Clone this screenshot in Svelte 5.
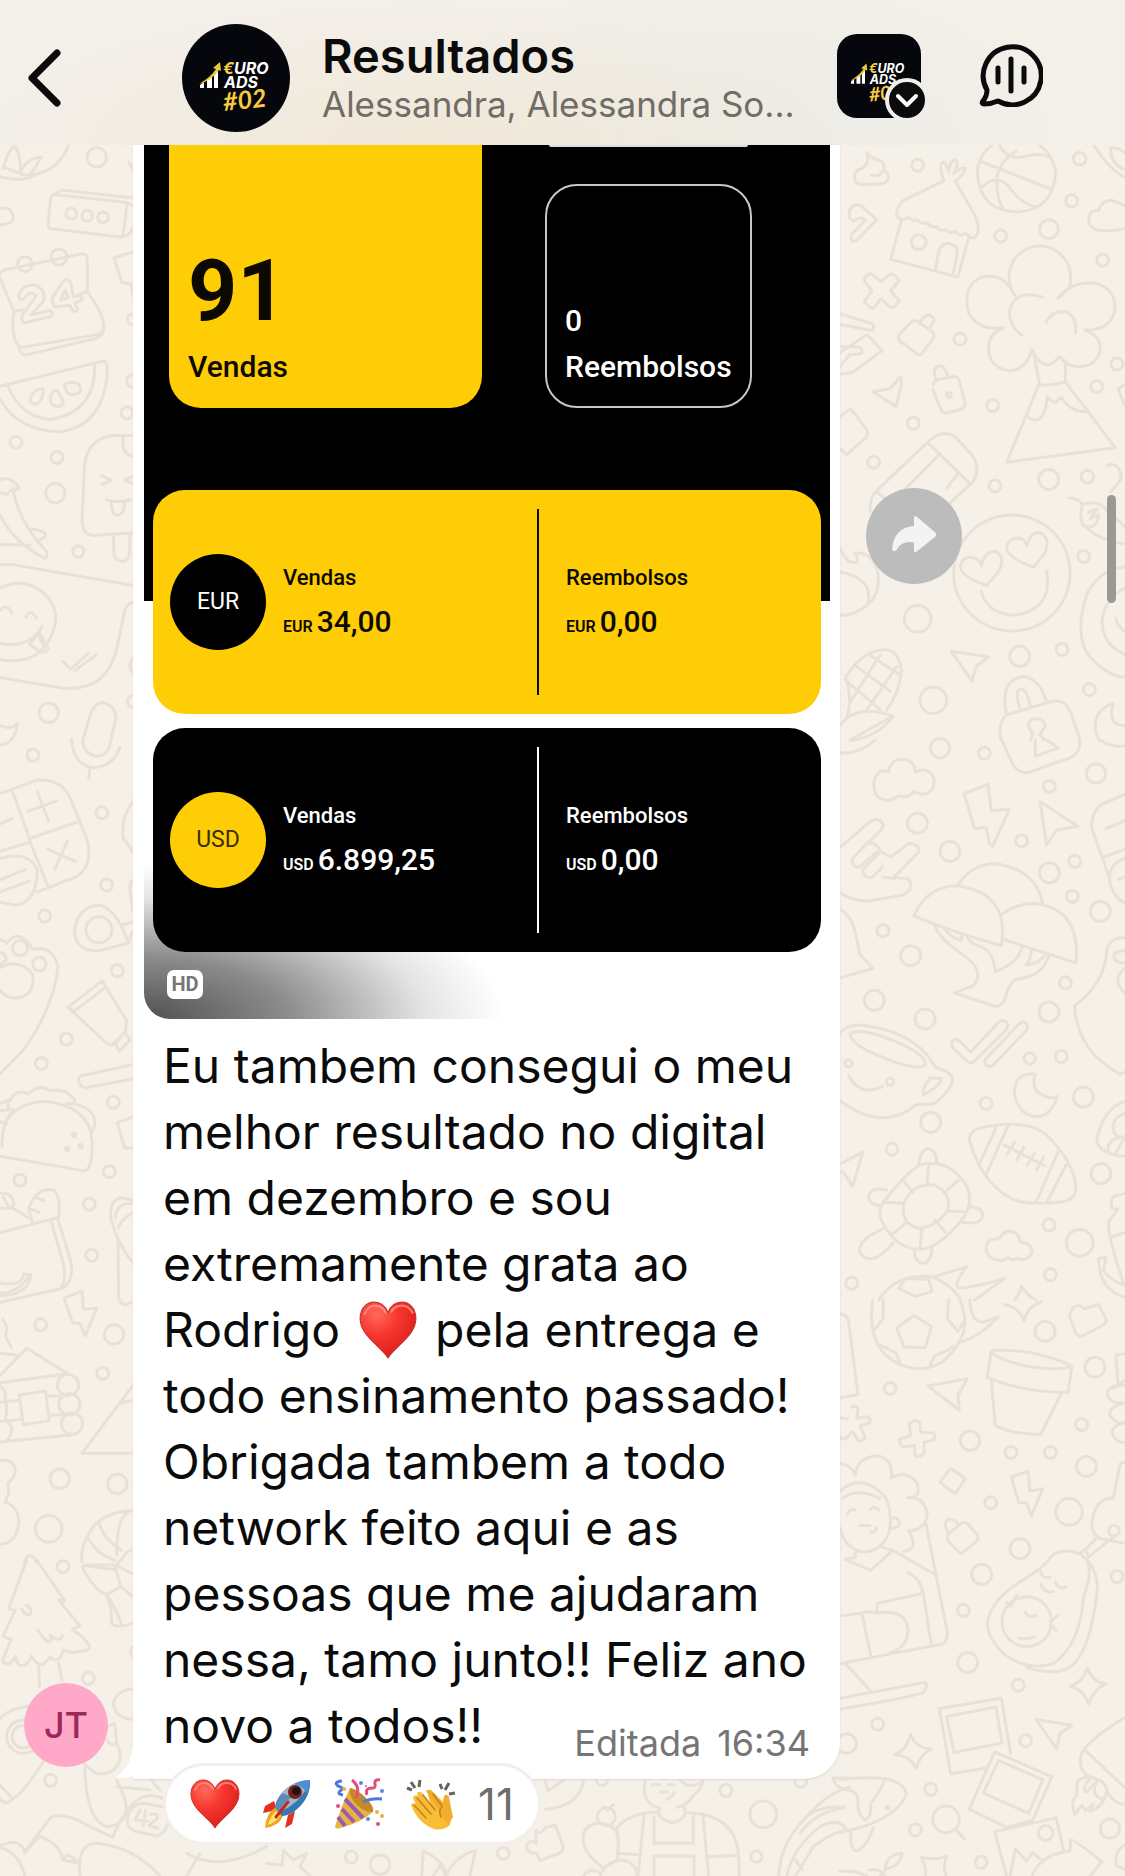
<script lang="ts">
  type Dot = [number, number, number];

  interface Panel {
    x: number;
    y: number;
    ky: number;
    dots: Dot[];
    paths: string[];
  }

  // "♥" marks where the heart drawing goes
  const lines = [
    "Eu tambem consegui o meu",
    "melhor resultado no digital",
    "em dezembro e sou",
    "extremamente grata ao",
    "Rodrigo ♥ pela entrega e",
    "todo ensinamento passado!",
    "Obrigada tambem a todo",
    "network feito aqui e as",
    "pessoas que me ajudaram",
    "nessa, tamo junto!! Feliz ano",
  ];
  const lastLine = "novo a todos!!";

  const balances = [
    { code: "EUR", sales: "34,00", refunds: "0,00", dark: false },
    { code: "USD", sales: "6.899,25", refunds: "0,00", dark: true },
  ];

  const STEP = 1 / 3;

  // Wallpaper doodles, one panel per region of the chat background
  const panels: Panel[] = [
    {
      x: 840,
      y: 140,
      ky: 0.3827,
      dots: [
        [233, 66, 18], [719, 49, 19], [695, 159, 18], [627, 233, 28], [482, 251, 18],
        [788, 314, 18], [360, 520, 18], [831, 585, 18], [770, 644, 18], [458, 694, 18],
        [220, 740, 18], [101, 842, 18], [465, 904, 18], [626, 887, 30], [742, 880, 19],
        [731, 1088, 18], [233, 1251, 40], [539, 1349, 30], [666, 1331, 18], [280, 1464, 40],
        [748, 1436, 18], [236, 267, 22], [327, 666, 7],
      ],
      paths: [
        "M44 100Q40 80 62 76Q90 66 82 34Q95 50 118 52Q138 62 130 78Q150 86 144 102Q138 116 110 115L66 116Q44 116 44 100M94 92Q120 98 130 78",
        "M455 14Q412 44 412 90Q420 184 530 188Q640 184 647 85Q640 40 600 14M420 55L632 128M478 14Q500 50 545 45Q600 30 632 46M528 30Q470 60 470 110Q472 160 490 180M425 125Q460 90 500 115Q540 165 585 174",
        "M170 196Q168 178 190 158L312 106Q296 66 306 60Q316 50 326 84Q330 52 346 52Q360 58 340 88Q372 66 376 76Q370 92 346 108L404 196Q420 226 412 246Q404 262 386 252Q380 240 366 248Q354 250 346 238Q330 248 318 234Q300 240 288 226Q274 230 260 216Q246 222 232 208Q220 216 206 202Q190 212 180 204Q170 204 170 196M184 208L152 312L354 358L386 254M286 340L296 292Q308 264 334 272Q358 280 350 306L338 354",
        "M30 206Q20 176 48 170Q62 168 72 178L110 208L50 262Q30 270 34 248L76 210Q62 196 42 212L30 206",
        "M74 360L88 350Q94 348 100 354L124 370L148 352Q156 348 164 354L178 366L152 394L178 420L162 436Q152 440 146 434L124 414L102 438Q94 442 88 436L72 422L96 394L74 370Z",
        "M762 14Q800 70 850 96M812 20Q808 56 850 76M812 20Q840 20 855 34",
        "M855 232Q810 240 778 236Q746 232 746 206Q750 180 776 184Q784 156 816 158Q840 164 855 172",
        "M524 406Q486 350 532 302Q580 262 642 286Q706 320 688 388L654 414Q700 364 774 376Q832 394 824 448Q806 500 734 496Q786 512 780 554Q764 594 712 592Q680 590 658 566Q626 600 602 580Q590 574 576 548Q552 610 500 602Q442 590 446 538Q450 504 490 490Q416 500 386 452Q366 384 420 360Q486 340 524 406M606 410Q530 390 510 440Q502 484 546 510M618 476Q640 442 682 450Q714 466 706 506M580 552L598 636L500 842L826 804L676 632L676 576M598 640Q640 642 676 632M560 716Q570 736 596 730Q618 720 622 670Q640 690 650 684Q656 676 664 672Q690 710 740 710",
        "M178 508L216 474Q224 470 232 474L276 500Q286 508 280 518L246 558Q238 564 230 558L178 524Q172 516 178 508M240 480Q248 456 270 458Q290 466 278 480L266 494",
        "M280 640Q278 632 292 626L344 618Q354 620 358 628L376 690Q374 700 362 704L316 714Q308 712 304 706L278 652M288 628Q276 596 296 590Q316 588 324 620",
        "M98 658L150 650L180 620Q186 622 184 640L168 696L98 658",
        "M0 454L96 480Q106 488 96 498L0 482M0 556L74 512Q82 508 88 514L126 550L40 606L0 612M0 540L50 540Q70 544 66 556Q50 562 30 560L0 592",
        "M0 722L32 702L78 754Q88 766 78 778L20 822L0 806",
        "M90 970Q90 930 110 916L262 790Q310 750 350 780L396 824Q424 858 400 892L330 948M262 790L390 898M196 912L300 820M320 910L356 870M108 918L150 946",
        "M342 1118A175 150 0 0 1 518 980A175 150 0 0 1 690 1130A175 150 0 0 1 518 1283A175 150 0 0 1 342 1118M440 1164Q356 1140 362 1110Q372 1084 402 1092Q422 1098 424 1112Q436 1070 470 1076Q500 1096 472 1132L440 1164M582 1116Q496 1092 500 1060Q514 1034 544 1042Q558 1048 560 1060Q572 1024 600 1026Q634 1040 614 1080L582 1116M424 1180Q440 1236 520 1242Q640 1230 620 1126",
        "M0 1066Q20 1110 50 1104Q56 1092 44 1080Q96 1074 114 1130Q128 1216 20 1242L0 1242M0 1128Q100 1146 84 1208",
        "M334 1336L446 1350L408 1376L396 1414L334 1336M20 1400Q70 1330 140 1332Q180 1338 184 1388Q180 1440 140 1490M14 1410L120 1488M44 1372L150 1440M84 1342L176 1396M30 1470L120 1346M80 1490L170 1376M16 1400Q40 1460 20 1510M0 1530Q50 1470 160 1506Q110 1560 40 1568M30 1568L150 1510",
        "M498 1496Q480 1410 550 1402Q600 1410 618 1464M540 1484Q520 1440 544 1434Q560 1436 570 1476M482 1568Q474 1520 500 1502L640 1466Q680 1462 694 1500L720 1568M572 1568L578 1548Q554 1530 576 1514Q610 1506 616 1530L600 1554L614 1568",
        "M686 936Q712 934 728 952M728 952Q716 980 728 1006Q750 1020 770 1000L776 980L750 990L772 964L744 974M728 952Q780 940 800 968Q840 1000 855 1010M740 1014Q790 1050 855 1056M802 850Q840 840 844 886L812 920M855 1116Q780 1120 740 1188Q700 1300 750 1350Q800 1400 855 1404M855 1170Q790 1200 786 1262Q790 1320 855 1344M855 1284Q830 1270 828 1250",
        "M820 1472Q760 1490 766 1540L776 1568M820 1472Q800 1530 855 1530M855 640L834 650L855 694",
      ],
    },
    {
      x: 840,
      y: 740,
      ky: 0.3571,
      dots: [
        [300, 23, 29], [433, 37, 18], [768, 94, 29], [628, 130, 18], [232, 233, 30],
        [545, 282, 18], [330, 312, 30], [704, 340, 18], [628, 372, 30], [697, 438, 18],
        [781, 480, 30], [129, 534, 18], [212, 604, 30], [676, 680, 18], [103, 729, 30],
        [627, 762, 30], [255, 781, 30], [569, 892, 17], [664, 886, 18], [730, 1000, 30],
        [438, 1018, 18], [272, 1071, 30], [156, 1146, 18], [783, 1214, 30], [627, 1358, 18],
        [719, 1408, 40], [631, 1497, 18], [35, 1521, 18], [150, 957, 11], [25, 905, 11],
      ],
      paths: [
        "M0 36Q60 40 106 0M486 0L516 64Q530 90 562 92L690 50Q720 40 720 0M586 0L586 46L654 22L620 0M780 0Q820 24 855 16",
        "M120 88Q136 84 146 90Q150 54 188 54Q224 56 226 90Q262 72 282 108Q286 150 246 152L220 144Q206 166 176 156Q140 182 108 154Q90 110 120 88",
        "M372 150L444 124L454 198L508 194L458 298L448 290L438 244L404 248Z",
        "M600 172L714 242L650 252L620 294Z",
        "M0 300L92 228Q120 214 130 238Q128 252 80 290L40 330Q30 348 48 356Q60 358 70 346L110 314M80 290Q110 284 122 312L68 362Q70 384 90 386Q106 380 128 354M122 312L152 328L206 290Q240 290 236 314L162 384L206 390Q226 416 190 434L90 450Q40 454 0 428M128 384L164 388",
        "M222 492Q260 410 350 408Q510 426 484 576Q310 530 222 492M354 408Q390 350 460 346Q590 360 608 460M486 488Q560 440 630 468Q720 500 708 624L488 558M284 516Q290 550 360 596Q440 644 400 688L342 708L466 746Q490 744 496 720Q510 670 540 668Q610 660 626 604M382 552Q390 570 420 578Q460 590 466 648Q530 630 546 580M312 524Q320 548 364 562L366 544M574 590Q572 614 558 630Q600 626 614 602",
        "M0 474Q34 490 46 540L60 600Q80 620 98 640L0 666",
        "M0 824Q10 800 60 798Q190 810 260 880L288 918Q340 930 338 956Q330 980 290 1014Q276 1022 230 1020Q130 1100 0 1010M30 822Q60 804 160 842Q260 880 256 910Q230 930 110 882Q30 850 30 822M26 940Q60 1000 128 970M270 946L304 948Q300 970 250 994Q244 980 270 946",
        "M338 862Q330 844 344 838Q354 838 366 850L392 874L476 790Q492 778 504 796Q504 806 496 814L402 900Q392 908 382 900L338 862M436 894L536 796Q552 782 562 798Q564 808 556 816L462 908Q444 922 434 904Z",
        "M586 936Q520 930 524 994Q540 1060 604 1054Q640 1040 652 998Q630 1006 610 996Q570 980 586 936",
        "M388 1120Q388 1092 430 1084Q560 1060 620 1106Q700 1180 708 1250Q708 1290 660 1294Q540 1306 500 1276Q420 1230 388 1120M468 1086L418 1188M504 1080L438 1218M654 1154L590 1290M678 1190L620 1296M492 1134L614 1192M524 1126L502 1160M552 1140L530 1176M584 1156L562 1190M610 1168L590 1204",
        "M0 1188L68 1154L38 1250L10 1210L0 1208M128 1296Q200 1210 240 1190Q330 1170 380 1250Q410 1310 340 1370Q280 1430 230 1426Q160 1420 122 1340Q116 1320 128 1296M192 1296Q220 1240 280 1246Q340 1270 322 1320Q280 1370 230 1366Q180 1350 192 1296M266 1186L262 1246M190 1234L220 1268M354 1234L322 1260M132 1294L190 1298M378 1322L322 1318M154 1386L196 1354M240 1424L246 1368M316 1378L284 1344M236 1192Q240 1148 264 1144Q292 1150 290 1184M140 1260Q88 1250 86 1280Q88 1302 122 1304M392 1308Q430 1310 428 1334Q420 1360 366 1350M130 1368Q50 1400 60 1436Q96 1480 160 1408M224 1426Q220 1462 250 1466Q276 1460 276 1420",
        "M454 1398Q480 1400 484 1388Q506 1364 534 1386L542 1406Q576 1410 576 1434Q566 1462 530 1452Q516 1460 504 1450Q488 1462 470 1456Q440 1452 438 1424Q440 1404 454 1398",
        "M116 1568Q170 1490 280 1504L382 1474Q340 1520 354 1534Q370 1540 494 1508L404 1568M176 1536L196 1508L266 1510L276 1544L228 1558ZM280 1504Q340 1530 362 1568M524 1568Q540 1550 544 1528Q560 1556 588 1568",
        "M855 152L790 178Q750 200 756 250L810 390M855 226L798 248M790 328L855 306M855 330Q800 350 810 400Q820 440 855 456M855 384L836 390",
        "M855 554Q810 550 800 590Q796 680 704 744Q710 870 840 936L855 930M855 590Q820 590 822 610Q830 626 855 624M855 640Q826 660 836 686L855 712",
        "M855 1012Q790 1030 770 1120Q776 1160 855 1166M855 1046Q810 1060 822 1100Q840 1118 855 1110M804 1150Q800 1120 840 1112M828 1156L850 1120M816 1312Q808 1276 830 1276L855 1270M816 1312L834 1314L806 1350Q800 1380 850 1520M814 1392L855 1380M776 1452L798 1450L790 1486Q820 1520 855 1526M776 1452Q776 1540 855 1560",
      ],
    },
    {
      x: 840,
      y: 1300,
      ky: 0.3673,
      dots: [
        [615, 85, 30], [765, 183, 30], [150, 241, 18], [725, 339, 18], [390, 383, 29],
        [513, 415, 18], [631, 415, 18], [739, 453, 30], [452, 552, 18], [687, 577, 40],
        [540, 677, 30], [425, 747, 30], [831, 753, 18], [370, 845, 18], [383, 987, 30],
        [535, 1049, 18], [113, 1155, 18], [557, 1200, 18], [20, 1208, 29], [272, 1332, 18],
        [318, 1414, 40], [226, 1443, 18], [810, 1439, 29], [617, 1451, 22], [423, 1531, 18],
        [143, 1382, 4], [822, 628, 16],
      ],
      paths: [
        "M98 0Q80 120 160 166Q240 208 310 166Q380 110 374 50Q370 20 360 0M130 0L130 50L104 80M170 76L222 42L274 72L256 130L192 128ZM326 0L322 50L354 86L370 60M120 122L168 144L180 172M270 178L284 152L330 134L338 126M390 0Q390 60 430 60L474 46Q420 100 362 114",
        "M492 12Q540 20 552 58Q560 20 604 4M688 44L700 20L718 14L732 24L776 12L800 56L790 68L722 100L708 92Z",
        "M0 38L16 42Q24 48 26 60L54 258L0 266M264 234L382 214L354 260L358 300Z",
        "M454 138Q580 130 696 180L684 252Q540 250 442 210ZM454 138Q460 160 560 180Q660 194 696 180M454 220L466 342Q520 366 602 366L664 254",
        "M34 292Q50 286 54 296L50 322L84 318Q96 328 86 336L60 342L76 374Q66 388 54 382L38 358L16 378Q2 380 0 372M0 320L22 324Z",
        "M208 336Q230 322 240 336L242 360L280 362Q288 372 282 380L252 388L252 416Q244 430 228 426Q222 420 224 396L188 400Q176 390 180 378L212 370Z",
        "M300 496L332 458L376 486L346 528ZM514 482L564 466L570 520L608 514L574 588L560 552L536 552Z",
        "M322 640L366 606Q374 604 384 610L412 640Q418 648 410 656L370 688Q360 692 354 684L324 656ZM324 632Q306 604 328 596Q348 596 354 612",
        "M0 446Q30 446 46 476Q50 430 110 424Q160 430 154 484Q200 460 232 500Q244 540 204 538Q250 534 262 580Q260 626 206 628Q240 680 190 684M2 520Q60 470 130 530Q150 550 150 590A74 78 0 0 1 0 620M8 540Q50 510 120 540M152 592Q180 592 178 610Q172 624 148 622M48 680L46 700L16 706L92 736L158 682L118 670M160 682L286 748M204 742Q240 756 250 800L274 938M258 610L322 906Q322 936 300 938L0 990M66 854L92 968M0 860L66 852L86 848L110 852Q200 840 204 900Q200 950 150 960M110 852L112 826L244 800M16 990L94 1066M0 1084L250 1042Q270 1040 250 1068Q240 1076 0 1114M22 584Q30 566 46 572M90 570Q106 560 116 572M60 614L90 614M92 632Q108 634 110 620",
        "M442 890Q440 820 560 756Q610 730 640 692Q700 670 740 706Q760 740 730 810Q720 940 640 990Q570 1010 500 970Q450 930 442 890M740 706Q780 750 770 800Q750 960 690 1000Q640 1024 560 1000M486 880A75 68 0 0 1 560 808A75 68 0 0 1 634 876A75 68 0 0 1 560 944A75 68 0 0 1 486 880M536 920Q560 924 584 918M556 850Q564 868 588 860M602 740Q606 760 630 754M646 768Q656 790 678 782M602 772Q612 800 640 794M500 824L512 834L530 804M632 876L654 858M632 886L650 900M718 690L736 680L748 698L740 706M736 680L770 648M748 698L826 640",
        "M855 440L840 446L820 540Q770 536 756 600Q750 640 790 652L855 662M828 150L855 146M828 150L834 226M855 218L820 240M855 232Q800 230 802 258Q810 284 855 280Q804 290 810 314Q830 340 855 334Q810 344 818 366Q830 390 855 388",
        "M690 1052Q730 1040 742 1002Q756 1040 798 1046Q760 1060 746 1100Q730 1060 690 1052M166 1238Q202 1222 212 1182Q226 1220 274 1222Q240 1238 228 1276Q210 1240 166 1238M588 1142L696 1158L660 1180L650 1222Z",
        "M298 1112L484 1084L512 1236M298 1112L332 1290L438 1274M320 1134L468 1108L486 1206L342 1232ZM464 1230L636 1298L578 1416L500 1436L388 1386ZM476 1254L608 1306L566 1398L430 1342ZM464 1448L648 1410L672 1502M464 1448L500 1568M510 1568L526 1494L560 1528L578 1504L610 1530M576 1568Q600 1510 690 1500L692 1470Q700 1466 786 1530L750 1568M348 1442L374 1468",
        "M855 1136Q740 1200 722 1240Q716 1290 756 1300M736 1226L855 1328M756 1300Q800 1310 802 1340Q820 1370 855 1374M704 1400Q690 1360 710 1350L712 1310Q730 1296 756 1300Q720 1330 740 1340Q760 1320 770 1310Q750 1350 790 1360L800 1340Q790 1380 750 1392L760 1372L736 1390L726 1376Z",
        "M0 1306Q100 1296 150 1306Q200 1320 198 1350Q160 1420 0 1450M0 1332Q50 1330 54 1360Q50 1400 74 1416Q96 1410 92 1370Q120 1340 132 1310M32 1450Q30 1500 50 1500Q80 1490 100 1436M242 1516Q280 1528 320 1514Q308 1540 318 1568M242 1516Q260 1540 256 1568M136 1546Q140 1510 186 1506Q184 1540 140 1548L120 1568M88 1552Q120 1546 136 1568M0 1556Q40 1550 80 1568M855 1484Q820 1500 830 1540L855 1550",
      ],
    },
    {
      x: 0,
      y: 140,
      ky: 0.4464,
      dots: [
        [290, 39, 29], [214, 165, 16], [262, 170, 16], [309, 173, 16], [75, 278, 22],
        [177, 262, 24], [398, 402, 16], [400, 540, 20], [381, 611, 18], [48, 677, 18],
        [171, 711, 18], [166, 791, 29], [235, 922, 17], [146, 1283, 29], [99, 1378, 18],
        [306, 1507, 18], [400, 1258, 18],
      ],
      paths: [
        "M206 12Q170 80 70 78L10 60M10 64Q20 30 44 12Q66 40 60 74M60 74Q80 40 124 38Q110 60 90 76M0 82Q60 96 104 80M0 152L24 154Q40 160 40 176Q34 190 0 190",
        "M162 122L380 140Q376 190 366 218L150 198Q142 196 144 186L152 132Q154 122 162 122M162 122L186 112L400 130M380 140L400 148M366 218Q390 214 400 196",
        "M0 300Q4 292 20 290L240 256Q262 252 262 270L262 340Q312 390 312 420Q308 432 290 436L70 464Q40 464 38 410L42 384L0 310M56 464Q60 480 76 482L290 444Q312 436 312 420M42 384L66 380M236 346L262 340",
        "M56 348Q70 320 110 326Q140 340 130 362L92 392L150 382Q166 388 150 396L72 410Q58 400 70 388Q100 360 108 348Q90 336 76 352Q60 366 56 348",
        "M158 352L188 318Q200 308 212 318L220 350Q250 346 246 358L224 366L234 380Q220 392 210 370L166 374Q154 366 158 352M196 336L182 358L204 354Z",
        "M0 552L306 496Q324 494 322 520Q310 640 180 654Q50 650 0 580M22 548Q60 620 150 626Q290 610 284 500M90 584Q98 556 130 558Q130 586 108 592Q94 592 90 584M152 574Q160 556 172 562Q188 578 190 590Q180 602 160 594Q148 586 152 574M192 548Q210 538 234 546Q246 556 240 564Q220 576 202 566Z",
        "M400 662L340 662Q260 670 254 730L246 850Q246 884 280 886L400 880M370 666Q360 700 400 710M304 752L334 762L306 772M400 752L374 762L400 770M320 806Q350 814 390 806M334 810Q334 840 352 840Q374 840 374 808M340 884L342 930Q348 944 370 944Q388 940 388 926L390 884M342 264L400 250M342 264L366 320L392 322L400 350",
        "M0 762Q30 750 58 780L40 788Q60 860 140 922Q144 940 130 936Q40 900 0 840M0 790L20 794L40 780M90 872Q140 874 136 888L120 896M0 906L90 908",
        "M0 952Q30 948 60 954L400 998M0 1204L190 1228Q320 1236 350 1140L374 1054Q380 1040 400 1034M0 1004Q60 980 120 1008Q180 1044 164 1090Q130 1180 0 1164M0 1128Q90 1140 126 1090M88 1130L118 1104L146 1140Q130 1154 112 1142ZM118 1112L132 1136M0 1054Q20 1036 36 1060M78 1070Q90 1046 110 1072M190 1168L212 1186L264 1150M226 1188L290 1152",
        "M270 1290Q284 1258 310 1260Q344 1266 348 1294L328 1360Q314 1384 284 1380Q250 1372 248 1346ZM214 1342Q220 1400 280 1406Q340 1404 360 1360M270 1406L266 1430M0 1312Q40 1322 52 1306Q48 1350 0 1356",
        "M0 1464L110 1434Q180 1430 208 1470L262 1568M38 1460L90 1568M84 1504L172 1480M112 1460L146 1526M92 1564L240 1526M0 1532L38 1520M400 1480Q360 1520 370 1568M388 50L400 70M400 1160Q380 1180 400 1196",
      ],
    },
    {
      x: 0,
      y: 840,
      ky: 0.5102,
      dots: [
        [320, 88, 18], [134, 149, 18], [352, 256, 18], [199, 390, 18], [124, 438, 18],
        [340, 514, 18], [328, 650, 18], [60, 667, 18], [268, 714, 18], [275, 814, 18],
        [122, 950, 18], [342, 969, 29], [308, 1045, 18], [179, 1252, 29], [352, 1262, 29],
        [146, 1350, 40], [60, 212, 23], [118, 243, 20], [297, 176, 39],
        [204, 1068, 32], [208, 1106, 32], [216, 1144, 32], [202, 605, 5], [222, 578, 5], [242, 600, 5],
      ],
      paths: [
        "M262 0Q280 50 230 72L110 102M88 0L142 88M142 18L226 42M202 2L164 58M0 36Q90 20 112 60Q110 120 50 128L0 122M0 78L76 58M0 102L90 80M0 22L90 4",
        "M396 180L386 202L290 218Q220 216 224 172Q240 128 300 128Q350 136 384 200M370 166L400 160M400 80Q384 80 392 110L398 140M376 0L400 26",
        "M0 194L20 202Q60 170 98 214Q160 206 174 250Q160 330 70 412L0 458M0 250Q60 230 98 264Q106 310 40 310Q10 306 0 294M0 220Q20 222 18 236L0 244",
        "M204 328L306 276L380 354L376 376L336 402L320 398ZM204 328L222 336L314 290M346 400L374 376L390 392L358 414Z",
        "M400 440L244 462Q230 466 240 480L254 486L400 468M400 542L352 554L374 604L400 604",
        "M0 620L250 648Q278 650 276 590Q270 520 130 512Q0 520 6 600M0 516L30 510Q50 486 84 498Q120 476 150 492Q200 484 226 512M20 510L26 524M200 516Q290 520 284 560L276 572M0 530L40 528L20 548M0 552L20 556",
        "M0 770L172 740L210 820Q226 860 190 878L0 906M152 744L190 830Q200 860 184 876M86 722Q110 680 160 686Q184 700 176 740M86 722L96 748M110 702L132 706M94 724L118 730M0 722L40 722L84 740M0 692Q40 690 42 716L26 720L10 700M0 888Q50 890 92 852Q90 890 0 894M0 868Q70 876 70 850L92 852",
        "M192 898L246 884L250 920L290 918L256 972L240 948L218 946ZM8 940L22 956L16 972L34 994",
        "M0 1050L80 996L204 1046L0 1064M0 1006L54 1010L40 1024M0 1102L58 1098M0 1140L62 1136M138 1090L176 1090M146 1128L190 1126M58 1088L136 1080L148 1138L70 1146ZM0 1070Q20 1080 16 1098Q24 1116 16 1138Q40 1146 34 1160Q26 1182 0 1180L214 1166",
        "M400 1068L246 1202L400 1202M362 1104L400 1098M332 740Q330 700 370 702L400 706M332 740Q350 790 400 830M346 740Q350 710 400 712M354 760Q370 740 400 730M354 784L356 896Q360 912 380 910L400 904",
        "M0 1216Q40 1212 46 1236L40 1250L24 1260L26 1280L16 1298Q60 1310 56 1340Q48 1380 0 1380",
        "M400 1314Q300 1316 266 1360Q240 1390 246 1414M298 1340Q310 1370 364 1392M266 1370Q290 1400 346 1412M252 1422L340 1430M350 1400Q350 1330 384 1318M340 1430L380 1396L400 1390M80 1412L72 1420Q82 1392 104 1408L108 1416",
      ],
    },
    {
      x: 0,
      y: 1560,
      ky: STEP,
      dots: [
        [189, 20, 18], [265, 355, 18], [152, 661, 18], [70, 530, 50], [70, 530, 34],
      ],
      paths: [
        "M80 0L28 140Q26 152 46 150L10 226Q14 236 34 236L8 300Q10 314 26 312Q40 304 46 288Q50 320 72 316Q90 306 94 288Q110 316 130 314Q144 300 150 290Q164 306 178 296Q190 282 188 270Q220 282 244 272Q270 276 268 256Q250 230 216 208L240 198L176 120L194 122L110 0M66 148Q74 166 90 164Q100 150 80 136M114 210Q130 240 146 246Q160 240 150 226Q180 250 188 226M116 312L118 380M176 310L186 362",
        "M246 20Q280 90 320 104Q340 160 334 190Q350 206 396 190M320 104Q350 150 366 196M320 104L362 80L396 108M256 16L344 14L396 40M344 14L362 80M398 388Q350 390 340 430Q346 476 398 478M398 262Q384 270 398 290",
        "M0 476Q30 440 120 436M0 676L38 716Q60 710 134 600M0 716Q16 740 38 716M254 610Q256 780 320 800Q420 790 350 660M254 610Q290 660 340 630Q376 600 350 550L344 490Q310 500 300 550M322 540Q330 560 350 552M0 858Q60 830 74 876L154 770Q200 760 250 790L338 832Q380 730 430 710Q480 700 500 726M120 830Q180 850 188 900L240 910M74 880L116 830M188 900L204 884L240 910M240 948Q230 850 290 850Q400 860 480 948M0 862Q60 880 74 948M352 680L450 690M436 640L480 690",
        "M384 770Q390 734 430 730L490 740Q510 750 506 780Q500 820 470 828L400 812Q376 800 384 770M420 750L406 780L444 784M436 752L430 796M452 764Q474 756 472 776L446 796L474 804",
        "M560 880Q640 930 760 880L800 860M600 880L560 948M800 910L846 916L850 870L880 900L920 880L900 920L930 948",
      ],
    },
    {
      x: 300,
      y: 1660,
      ky: STEP,
      dots: [
        [154, 591, 18], [240, 614, 29], [610, 580, 18],
      ],
      paths: [
        "M365 648L370 572Q440 610 440 648M440 648Q460 590 526 572L510 648M400 648L420 616L438 648",
      ],
    },
    {
      x: 520,
      y: 1690,
      ky: STEP,
      dots: [
        [618, 301, 18], [730, 373, 40], [842, 274, 18], [709, 500, 17], [259, 380, 27], [246, 268, 18],
      ],
      paths: [
        "M192 268Q180 350 76 358M76 274L84 304L134 268M48 420Q60 440 76 412L106 406L130 470Q128 490 106 494L60 512L50 490Q20 490 20 468Q28 446 48 460Z",
        "M376 268Q360 340 420 354M548 268Q550 296 520 316Q500 350 470 352M480 268Q500 300 548 276M396 284L420 284M444 284L462 284M420 306L444 306M440 328Q460 320 462 308M420 354L414 370Q430 396 460 398Q490 390 496 368L492 350M414 366Q320 370 290 416M496 368Q650 370 656 500M372 378L354 558M548 370L566 558M402 380L402 460L520 460L520 370M402 558L402 498L522 498L522 558M566 500L656 496L658 558M290 490L356 494M290 416Q300 450 292 500M190 450Q186 410 230 400Q300 400 294 460L292 510L250 534Q190 490 190 450M240 558Q260 510 310 510Q350 520 352 558M190 558Q210 530 240 548M250 350L262 360L280 344",
        "M776 558Q780 460 860 380Q920 310 990 290M800 558Q820 470 900 410Q960 380 980 420Q930 430 880 470L826 558M860 380Q900 346 974 352Q880 370 840 430M826 510L846 540M938 264L990 264M938 264Q950 300 990 300",
      ],
    },
  ];
</script>

{#snippet logo()}
  <svg class="logo" viewBox="0 0 108 108" aria-label="Euro Ads #02">
    <path d="M18 64v-3l4-3v6zM25 64v-8l5-4v12zM32 64V51l4-5v18z" fill="#fff" />
    <path d="M17 60Q29 53 34 45l-3-1 7-6 1 9-2-1Q29 57 17 60z" fill="#e8c83c" />
    <text x="41" y="50" class="logo-word"><tspan fill="#f2d03e">€</tspan>URO</text>
    <text x="42" y="64" class="logo-word">ADS</text>
    <text x="42" y="87" class="logo-tag" transform="rotate(-6 42 87)">#02</text>
  </svg>
{/snippet}

{#snippet heart()}
  <svg class="emoji" viewBox="0 0 50 50" role="img" aria-label="❤️">
    <defs>
      <radialGradient id="heartFill" cx="30%" cy="22%" r="80%">
        <stop offset="0" stop-color="#ff6a5c" />
        <stop offset="0.45" stop-color="#f8382f" />
        <stop offset="1" stop-color="#dc1f1d" />
      </radialGradient>
    </defs>
    <path d="M25 49C19 39 1 30 1 15 1 6 7 1 13 1c6 0 10 4 12 9C27 5 31 1 37 1c6 0 12 5 12 14C49 30 31 39 25 49z" fill="url(#heartFill)" stroke="#c9302a" stroke-width="1" />
    <path d="M5 11Q8 4 14 4q6 0 9 6M28 9q3-5 9-5 6 0 9 6" fill="none" stroke="#ff9b90" stroke-width="2" stroke-linecap="round" opacity="0.7" />
  </svg>
{/snippet}

<div class="page">
  <header class="header">
    <button class="back" aria-label="Voltar">
      <svg viewBox="0 0 36 60"><path d="M31 5 6 30l25 25" /></svg>
    </button>
    <div class="group-avatar">{@render logo()}</div>
    <div class="heading">
      <h1>Resultados</h1>
      <p>Alessandra, Alessandra So...</p>
    </div>
    <button class="community" aria-label="Comunidade">
      {@render logo()}
      <span class="chevron">
        <svg viewBox="0 0 36 36"><path d="m9 14 9 9 9-9" /></svg>
      </span>
    </button>
    <button class="voice" aria-label="Conversa de voz">
      <svg viewBox="0 0 64 64">
        <path d="M8 47A29 29 0 1 1 19 58Q12 61 5 61Q2 61 4 58Q8 53 8 47Z" />
        <path d="M19 25v14M32 16v32M45 25v14" />
      </svg>
    </button>
  </header>

  <main class="chat">
    <svg class="wallpaper" viewBox="0 145 1125 1731" aria-hidden="true">
      {#each panels as panel}
        <g transform="translate({panel.x} {panel.y}) scale({STEP} {panel.ky})">
          {#each panel.paths as d}
            <path {d} />
          {/each}
          {#each panel.dots as [cx, cy, r]}
            <ellipse {cx} {cy} rx={r} ry={(r * STEP) / panel.ky} />
          {/each}
        </g>
      {/each}
    </svg>

    <div class="sender">
      <div class="sender-avatar">JT</div>
    </div>

    <article class="message">
      <div class="bubble">
        <svg class="tail" viewBox="0 0 56 50" aria-hidden="true">
          <path d="M18 0v10Q18 36 1 47q16 3 29-7 10 9 26 9V0z" />
        </svg>
        <div class="photo">
          <div class="top-cards">
            <section class="card-sales">
              <strong>91</strong>
              <span>Vendas</span>
            </section>
            <div class="card-column">
              <div class="card-cut"></div>
              <section class="card-refunds">
                <span>0</span>
                <span>Reembolsos</span>
              </section>
            </div>
          </div>
          <div class="balances">
            {#each balances as b}
              <section class="balance" class:dark={b.dark}>
                <div class="coin">{b.code}</div>
                <div class="figure">
                  <span class="label">Vendas</span>
                  <span class="amount"><small>{b.code}</small>{b.sales}</span>
                </div>
                <div class="figure refunds">
                  <span class="label">Reembolsos</span>
                  <span class="amount"><small>{b.code}</small>{b.refunds}</span>
                </div>
              </section>
            {/each}
          </div>
          <span class="hd">HD</span>
        </div>
        <div class="text">
          {#each lines as line}
            {@const [start, end] = line.split("♥")}
            <div class="line">{start}{#if end}{@render heart()}{end}{/if}</div>
          {/each}
          <div class="line last">
            <span>{lastLine}</span>
            <span class="meta"><span>Editada</span><time>16:34</time></span>
          </div>
        </div>
      </div>

      <button class="reactions" aria-label="11 reações">
        {@render heart()}
        <svg class="emoji" viewBox="0 0 50 50" role="img" aria-label="🚀">
          <path d="M12 22 3 27l-2 7 14-3zM26 36l-3 13 7-4 3-13z" fill="#e2321f" />
          <path d="M14 28Q4 34 3 49q14-2 18-12z" fill="#f3a41d" />
          <path d="M14 32Q8 38 6 46q8-3 12-9z" fill="#ffe96b" />
          <path d="M48 1Q28 2 19 15q-5 7-6 14l7 8q9-1 15-7Q48 19 48 1z" fill="#9fb6c8" />
          <path d="M48 1q1 17-13 29-6 6-15 7l-3-4Q40 24 48 1z" fill="#3778b4" />
          <path d="M48 1q-9 0-16 4 8 1 13 9 3-6 3-13z" fill="#4b90d0" />
          <path d="M20 14q-7 8-7 15l4 4q5-10 13-15z" fill="#5b8cb6" />
          <circle cx="33" cy="13" r="7" fill="#7c1d1f" />
          <circle cx="34" cy="12" r="4" fill="#1d1416" />
          <path d="m26 23-12 15" stroke="#c22b20" stroke-width="3" stroke-linecap="round" />
        </svg>
        <svg class="emoji" viewBox="0 0 50 50" role="img" aria-label="🎉">
          <path d="M16 9Q6 30 1 48q2 3 5 1 20-5 33-16-7-18-23-24z" fill="#e6b53b" />
          <path d="M16 9q-2 8 7 17 8 8 16 7 2-5-7-14-9-9-16-10z" fill="#c58a25" />
          <path d="m11 20 18 19M8 30l12 13M4 38l7 9" stroke="#9a5bb8" stroke-width="4" />
          <path d="M8 2Q-1 3 4 7q7 2 2 5-3 3 3 4M29 23q8-4 19-3" fill="none" stroke="#4b7be0" stroke-width="3" />
          <path d="M18 1q9 7 4 18M46 1q-6-1-5 4 1 5-4 4-6 0-4 7" fill="none" stroke="#e0507a" stroke-width="3" />
          <g fill="#5a86e0"><circle cx="27" cy="4" r="2" /><circle cx="48" cy="12" r="2" /><circle cx="34" cy="40" r="2" /></g>
          <g fill="#e0507a"><circle cx="4" cy="27" r="2" /><circle cx="32" cy="7" r="1" /><circle cx="44" cy="45" r="2" /></g>
          <g fill="#e8ac48"><circle cx="10" cy="10" r="2" /><circle cx="43" cy="33" r="2" /><circle cx="48" cy="37" r="2" /></g>
        </svg>
        <svg class="emoji" viewBox="0 0 50 50" role="img" aria-label="👏">
          <path d="M5 26q2-3 5-1l-3-6q1-4 5-2l-1-3q3-3 6 1l7 9-2-8q1-5 5-3 4 4 6 12 4 5 8 8 5 6 3 13-7 6-16 4Q12 44 5 26z" fill="#f7bd36" />
          <path d="m20 12q4-3 7 1l10 10 1-6q3-3 5 1 2 12 4 20l-5 8" fill="#f0ae2c" />
          <path d="m8 26 12 13M11 19l14 16M17 16l12 15M27 15l9 12M36 28q-4 3-1 10" fill="none" stroke="#c77f1a" stroke-width="1.5" stroke-linecap="round" />
          <path d="m1 9 5 2M5 3l4 6M14 1l-1 7M34 5l2 5M43 4l-4 7M49 14l-6 1" stroke="#67625c" stroke-width="3" />
        </svg>
        <span class="count">11</span>
      </button>
    </article>

    <button class="forward" aria-label="Encaminhar">
      <svg viewBox="0 0 50 46">
        <path d="M25 3q0-3 3-1l20 17q3 3 0 5L28 40q-3 2-3-1v-9Q11 28 6 38q-4 4-5-1Q3 14 25 12z" />
      </svg>
    </button>

    <div class="scroll-thumb"></div>
  </main>
</div>

<style>
  :global(body) {
    background: #f5f1e9;
  }

  .page {
    font-family: Inter, "Liberation Sans", sans-serif;
    color: #0b0b0b;
    overflow: hidden;
  }

  button {
    padding: 0;
    border: 0;
    background: none;
    color: inherit;
    font: inherit;
    cursor: pointer;
  }

  svg {
    display: block;
  }

  .header {
    display: flex;
    align-items: center;
    box-sizing: border-box;
    height: 145px;
    padding: 10px 82px 0 26px;
    background:
      radial-gradient(ellipse 40% 100% at 38% 100%, #f0e8d8, transparent),
      radial-gradient(ellipse 30% 120% at 65% 100%, #ebebe6, transparent),
      #f3efe9;
  }

  .back svg {
    width: 36px;
    height: 60px;
    fill: none;
    stroke: #0b0b0b;
    stroke-width: 7;
    stroke-linecap: round;
    stroke-linejoin: round;
  }

  .group-avatar {
    flex: none;
    width: 108px;
    height: 108px;
    margin-left: 120px;
    border-radius: 50%;
    background: #05070c;
  }

  .logo {
    width: 100%;
    height: 100%;
  }

  .logo-word {
    font: italic 700 16px Inter, sans-serif;
    fill: #fff;
  }

  .logo-tag {
    font: italic 700 25px Lato, sans-serif;
    fill: #f6cb3d;
  }

  .heading {
    flex: 1;
    min-width: 0;
    margin-left: 32px;
  }

  h1,
  p {
    margin: 0;
  }

  h1 {
    font-size: 47px;
    line-height: 52px;
    font-weight: 600;
  }

  .heading p {
    font-size: 35px;
    line-height: 44px;
    color: #706c66;
    white-space: nowrap;
  }

  .community {
    position: relative;
    flex: none;
    width: 84px;
    height: 84px;
    margin-bottom: 4px;
    border-radius: 20px;
    background: #05070c;
  }

  .chevron {
    position: absolute;
    right: -8px;
    bottom: -4px;
    border: 4px solid #f0eeea;
    border-radius: 50%;
    background: #0b0b0b;
  }

  .chevron svg {
    width: 36px;
    height: 36px;
    fill: none;
    stroke: #fff;
    stroke-width: 4;
    stroke-linecap: round;
    stroke-linejoin: round;
  }

  .voice {
    flex: none;
    margin: 0 0 6px 58px;
  }

  .voice svg {
    width: 64px;
    height: 64px;
    fill: none;
    stroke: #0b0b0b;
    stroke-width: 5;
    stroke-linecap: round;
    stroke-linejoin: round;
  }

  .chat {
    position: relative;
    display: grid;
    grid-template-columns: 133px minmax(0, 707px) 1fr;
    padding-bottom: 32px;
  }

  .wallpaper {
    position: absolute;
    top: 0;
    left: 0;
    width: 100%;
    fill: none;
    stroke: #e9e1d6;
    stroke-width: 3;
    stroke-linejoin: round;
    stroke-linecap: round;
  }

  .wallpaper * {
    vector-effect: non-scaling-stroke;
  }

  .sender {
    position: relative;
    display: flex;
    align-items: flex-end;
    padding: 0 0 78px 24px;
  }

  .sender-avatar {
    width: 84px;
    height: 84px;
    border-radius: 50%;
    background: #ffa8c8;
    color: #98295a;
    font-size: 36px;
    font-weight: 500;
    line-height: 84px;
    text-align: center;
  }

  .message {
    position: relative;
  }

  .bubble {
    position: relative;
    padding: 0 10px 20px 11px;
    border-radius: 0 0 36px 0;
    background: #fff;
    box-shadow: 0 1px 2px #dcd6cc;
  }

  .tail {
    position: absolute;
    left: -18px;
    bottom: -1px;
    width: 56px;
    height: 50px;
    fill: #fff;
  }

  .photo {
    position: relative;
    height: 874px;
    overflow: hidden;
    border-radius: 0 0 0 26px;
    background:
      radial-gradient(ellipse 360px 155px at 0 100%, #505050, #8c8c8c 40%, #e4e4e4 78%, transparent) no-repeat,
      linear-gradient(#000 456px, #fff 456px);
    font-family: Roboto, sans-serif;
  }

  .top-cards {
    display: flex;
    gap: 63px;
    height: 263px;
    padding: 0 78px 0 25px;
    font-size: 30px;
    line-height: 46px;
    font-weight: 500;
  }

  .card-sales {
    display: flex;
    flex: 1;
    flex-direction: column;
    justify-content: flex-end;
    padding: 0 19px 18px;
    border-radius: 0 0 32px 32px;
    background: #ffcd05;
    color: #0c0a00;
  }

  .card-sales strong {
    font-size: 86px;
    line-height: 106px;
    font-weight: 700;
  }

  .card-column {
    display: flex;
    flex-direction: column;
    gap: 37px;
    width: 207px;
  }

  .card-cut {
    height: 2px;
    margin: 0 4px;
    border-radius: 0 0 4px 4px;
    background: #ddd;
  }

  .card-refunds {
    display: flex;
    flex: 1;
    flex-direction: column;
    justify-content: flex-end;
    padding: 0 18px 16px;
    border: 2px solid #c8c8c8;
    border-radius: 32px;
    color: #fff;
  }

  .balances {
    display: grid;
    gap: 14px;
    padding: 82px 9px 0;
  }

  .balance {
    display: grid;
    grid-template-columns: 96px 1fr 284px;
    align-items: center;
    height: 224px;
    padding-left: 17px;
    border-radius: 32px;
    background: #ffcd05;
    color: #0c0a00;
  }

  .balance.dark {
    background: #000;
    color: #fff;
  }

  .coin {
    height: 96px;
    border-radius: 50%;
    background: #000;
    color: #fff;
    font-size: 23px;
    line-height: 96px;
    text-align: center;
  }

  .dark .coin {
    background: #ffcd05;
    color: #3a2e00;
  }

  .figure {
    display: flex;
    flex-direction: column;
    justify-content: center;
    padding-left: 17px;
    font-weight: 500;
  }

  .refunds {
    height: 186px;
    padding-left: 27px;
    border-left: 2px solid currentColor;
  }

  .label {
    font-size: 22px;
    line-height: 44px;
  }

  .amount {
    font-size: 30px;
    line-height: 44px;
  }

  .amount small {
    margin-right: 4px;
    font-size: 16px;
    font-weight: 600;
  }

  .hd {
    position: absolute;
    left: 23px;
    bottom: 20px;
    width: 36px;
    border-radius: 7px;
    background: #fff;
    color: #777;
    font-size: 20px;
    line-height: 29px;
    font-weight: 700;
    text-align: center;
  }

  .text {
    position: relative;
    padding: 14px 20px 0 19px;
    font-size: 48px;
    line-height: 66px;
  }

  .line {
    height: 66px;
    white-space: pre;
  }

  .line .emoji {
    display: inline-block;
    width: 60px;
    height: 58px;
    margin: 0 4px;
    vertical-align: -12px;
  }

  .last {
    display: flex;
    align-items: flex-end;
    justify-content: space-between;
  }

  .meta {
    display: flex;
    gap: 16px;
    color: #757575;
    font-size: 36px;
    line-height: 32px;
  }

  .reactions {
    position: relative;
    display: flex;
    align-items: center;
    gap: 22px;
    height: 82px;
    margin: -16px 0 0 30px;
    padding: 0 24px;
    border: 3px solid #f2efea;
    border-radius: 41px;
    background: #fff;
  }

  .reactions .emoji {
    width: 50px;
    height: 56px;
  }

  .count {
    color: #6e6e6e;
    font-size: 44px;
  }

  .forward {
    position: relative;
    display: grid;
    place-items: center;
    width: 96px;
    height: 96px;
    margin: 343px 0 0 26px;
    border-radius: 50%;
    background: #bcbcbc;
  }

  .forward svg {
    width: 48px;
    height: 42px;
    fill: #f3f3f3;
  }

  .scroll-thumb {
    position: absolute;
    top: 350px;
    right: 9px;
    width: 9px;
    height: 108px;
    border-radius: 5px;
    background: #9c9994;
  }
</style>
